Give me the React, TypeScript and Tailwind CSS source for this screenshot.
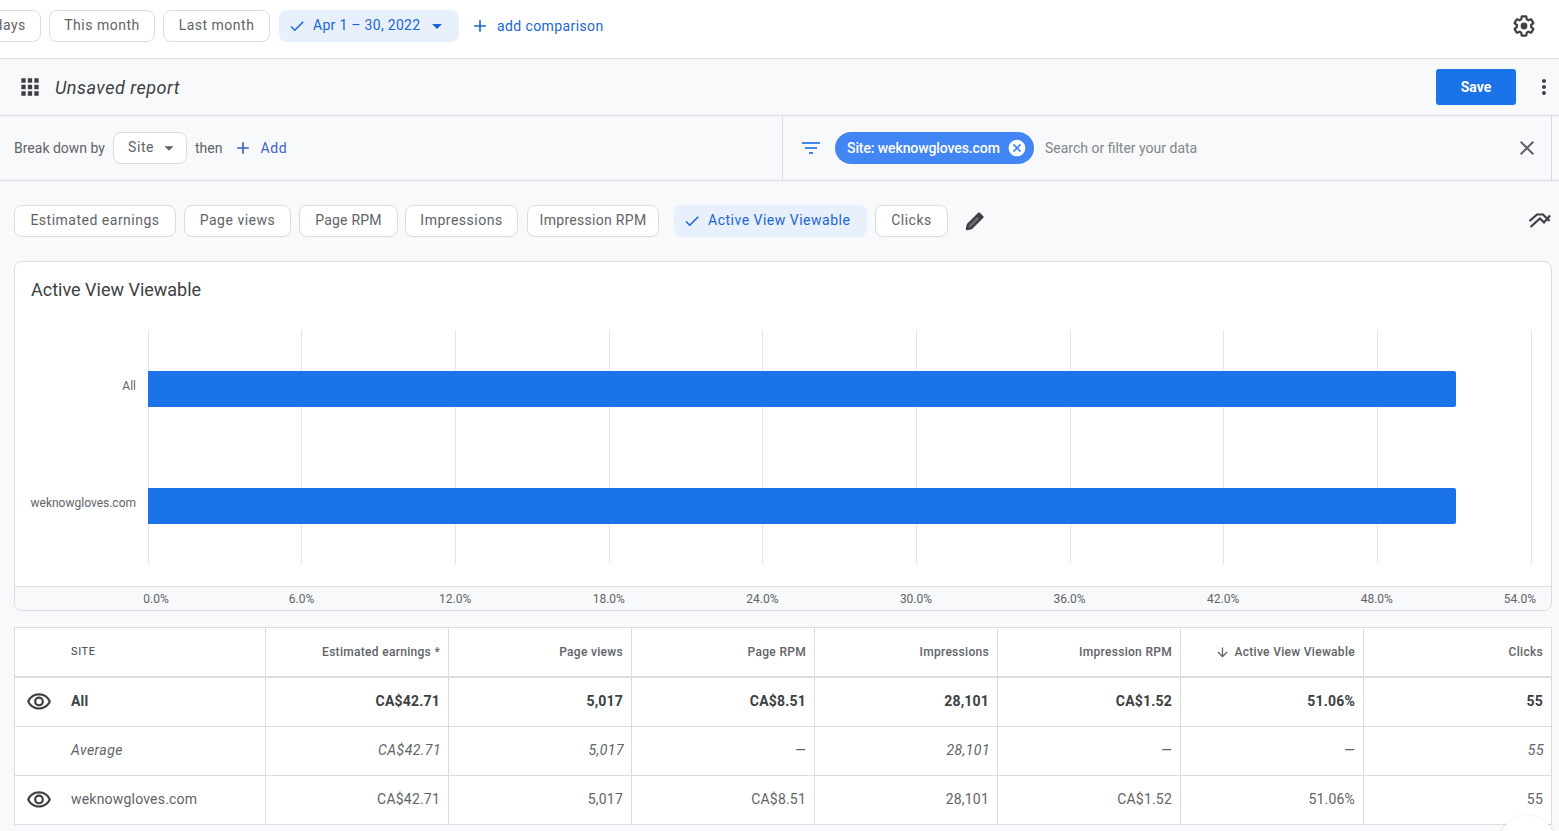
import {
  MdAdd,
  MdApps,
  MdArrowDownward,
  MdArrowDropDown,
  MdCancel,
  MdCheck,
  MdClose,
  MdFilterList,
  MdMoreVert,
  MdOutlineVisibility,
} from "react-icons/md";

const font = "font-['Roboto',sans-serif]";

function Chip({
  label,
  className = "",
  tracking = "tracking-[0.5px]",
}: {
  label: string;
  className?: string;
  tracking?: string;
}) {
  return (
    <div
      className={`h-8 shrink-0 flex items-center justify-center rounded-lg border border-[#dadce0] bg-white pb-[1px] text-[14px] text-[#5f6368] ${tracking} ${className}`}
    >
      {label}
    </div>
  );
}

function ActiveChip({
  label,
  caret,
  className = "",
  tracking = "tracking-[0.45px]",
}: {
  label: string;
  caret?: boolean;
  className?: string;
  tracking?: string;
}) {
  return (
    <div
      className={`h-8 shrink-0 flex items-center rounded-lg bg-[#e8f0fe] pl-[9px] pb-[1px] text-[14px] text-[#1967d2] ${tracking} ${className}`}
    >
      <MdCheck className="text-[18px] mr-[7px]" />
      {label}
      {caret && <MdArrowDropDown className="text-[24px] ml-[5px]" />}
    </div>
  );
}

function TrendIcon() {
  return (
    <svg width="24" height="24" viewBox="0 0 24 24" fill="none" stroke="#3c4043" strokeWidth="2.2">
      <path d="M1.5 12 9 5.5h6l6.5 6.5" />
      <path d="M2.5 18 12 9.5l4 4 6-7" />
    </svg>
  );
}

function PencilIcon() {
  return (
    <svg width="24" height="24" viewBox="0 0 24 24" className="ml-[3px]">
      <path d="M4 20 5 15.5 16 4.5 19.5 8 8.5 19Z" fill="#6b6e72" stroke="#3c4043" strokeWidth="2.4" strokeLinejoin="round" />
      <path d="M13.5 7 16 4.5 19.5 8 17 10.5Z" fill="#3c4043" />
    </svg>
  );
}

function GearIcon() {
  return (
    <svg width="24" height="24" viewBox="0 0 24 24" className="ml-auto mr-[23px]">
      <path
        d="M19.14 12.94c.04-.3.06-.61.06-.94 0-.32-.02-.64-.07-.94l2.03-1.58c.18-.14.23-.41.12-.61l-1.92-3.32c-.12-.22-.37-.29-.59-.22l-2.39.96c-.5-.38-1.03-.7-1.62-.94l-.36-2.54c-.04-.24-.24-.41-.48-.41h-3.84c-.24 0-.43.17-.47.41l-.36 2.54c-.59.24-1.13.57-1.62.94l-2.39-.96c-.22-.08-.47 0-.59.22L2.74 8.87c-.12.21-.08.47.12.61l2.03 1.58c-.05.3-.09.63-.09.94s.02.64.07.94l-2.03 1.58c-.18.14-.23.41-.12.61l1.92 3.32c.12.22.37.29.59.22l2.39-.96c.5.38 1.03.7 1.62.94l.36 2.54c.05.24.24.41.48.41h3.84c.24 0 .44-.17.47-.41l.36-2.54c.59-.24 1.13-.56 1.62-.94l2.39.96c.22.08.47 0 .59-.22l1.92-3.32c.12-.22.07-.47-.12-.61l-2.01-1.58z"
        fill="none"
        stroke="#3c4043"
        strokeWidth="2.2"
      />
      <circle cx="12" cy="12" r="3.4" fill="#3c4043" />
    </svg>
  );
}

const ticks = [0, 1, 2, 3, 4, 5, 6, 7, 8];
const axis = ["6.0%", "12.0%", "18.0%", "24.0%", "30.0%", "36.0%", "42.0%", "48.0%"];

function Bar() {
  return <div className="h-9 w-[1308px] rounded-r-[2px] bg-[#1a73e8]" />;
}

const headers = [
  "Estimated earnings *",
  "Page views",
  "Page RPM",
  "Impressions",
  "Impression RPM",
  "Active View Viewable",
  "Clicks",
];

const rows = [
  { name: "All", eye: true, italic: false, style: "font-bold text-[#3c4043] tracking-[0.2px]", vals: ["CA$42.71", "5,017", "CA$8.51", "28,101", "CA$1.52", "51.06%", "55"] },
  { name: "Average", eye: false, italic: true, style: "italic text-[#5f6368] tracking-[0.45px]", vals: ["CA$42.71", "5,017", "—", "28,101", "—", "—", "55"] },
  { name: "weknowgloves.com", eye: true, italic: false, style: "text-[#5f6368] tracking-[0.2px]", vals: ["CA$42.71", "5,017", "CA$8.51", "28,101", "CA$1.52", "51.06%", "55"] },
];

function TableRow({ row, last }: { row: (typeof rows)[number]; last: boolean }) {
  return (
    <div className={`grid grid-cols-[251px_repeat(6,183px)_1fr] ${last ? "h-[48px]" : "h-[49px] border-b border-[#dadce0]"}`}>
      <div className={`flex items-center border-r border-[#dadce0] pb-[1px] text-[14px] ${row.style}`}>
        <div className="w-[48px] flex justify-center mr-[8px]">
          {row.eye && <MdOutlineVisibility className="text-[26px] text-[#3c4043]" />}
        </div>
        {row.name}
      </div>
      {row.vals.map((v, i) => (
        <div
          key={i}
          className={`flex items-center justify-end pb-[1px] text-[14px] ${row.italic && v !== "—" ? "pr-[7px]" : "pr-[8px]"} ${i < 6 ? "border-r border-[#dadce0]" : ""} ${row.style}`}
        >
          {v}
        </div>
      ))}
    </div>
  );
}

export default function App() {
  return (
    <div className={`${font} relative w-[1559px] h-[831px] overflow-hidden bg-[#f8f9fa]`}>
      {/* date range */}
      <div className="h-[59px] bg-white border-b border-[#dadce0] flex items-center overflow-hidden pb-[6px]">
        <Chip label="Last 7 days" className="ml-[-66px] mr-2 w-[107px]" />
        <Chip label="This month" className="mr-2 w-[106px]" />
        <Chip label="Last month" className="mr-[9px] w-[107px]" />
        <ActiveChip label="Apr 1 – 30, 2022" caret className="w-[180px]" tracking="tracking-[0.3px]" />
        <div className="flex items-center ml-[13px] text-[14px] tracking-[0.4px] text-[#1967d2]">
          <MdAdd className="text-[20px] mr-[7px] ml-[-2px]" />
          add comparison
        </div>
        <GearIcon />
      </div>

      {/* report title */}
      <div className="h-[57px] border-b border-[#dadce0] flex items-center">
        <MdApps className="text-[26px] text-[#3c4043] ml-[17px] mr-[12px]" />
        <span className="text-[18px] italic tracking-[0.5px] text-[#3c4043]">Unsaved report</span>
        <button className="ml-auto h-9 w-[80px] rounded-[3px] bg-[#1a73e8] text-[14px] font-bold text-white">Save</button>
        <MdMoreVert className="text-[24px] text-[#3c4043] ml-[16px] mr-[3px]" />
      </div>

      {/* break down + filter */}
      <div className="h-[65px] border-b border-[#dadce0] flex">
        <div className="w-[783px] border-r border-[#dadce0] flex items-center text-[14px] text-[#5f6368]">
          <span className="ml-[14px]">Break down by</span>
          <div className="ml-[8px] h-8 w-[74px] flex items-center rounded-lg border border-[#dadce0] bg-white pl-[14px] pb-[1px] tracking-[0.6px]">
            Site
            <MdArrowDropDown className="text-[22px] ml-[4px]" />
          </div>
          <span className="ml-[8px]">then</span>
          <MdAdd className="text-[20px] text-[#3b62c4] ml-[11px]" />
          <span className="ml-[7px] text-[#3b62c4] tracking-[0.7px]">Add</span>
        </div>
        <div className="w-[769px] flex items-center border-r border-[#dadce0]">
          <MdFilterList className="text-[24px] text-[#4285f4] ml-[16px]" />
          <div className="ml-[12px] h-8 w-[199px] flex items-center rounded-full bg-[#4285f4] pl-[12px] text-[14px] font-medium tracking-[-0.1px] text-white">
            Site: weknowgloves.com
            <MdCancel className="text-[20px] ml-[7px]" />
          </div>
          <span className="ml-[11px] text-[14px] text-[#80868b]">Search or filter your data</span>
          <MdClose className="text-[24px] text-[#5f6368] ml-auto mr-[12px]" />
        </div>
      </div>

      {/* metric chips */}
      <div className="flex items-center mt-[24px] pl-[14px] h-8">
        <Chip label="Estimated earnings" className="w-[162px] mr-2" />
        <Chip label="Page views" className="w-[107px] mr-2" />
        <Chip label="Page RPM" className="w-[99px] mr-[7px]" tracking="tracking-[0.2px]" />
        <Chip label="Impressions" className="w-[113px] mr-[9px]" />
        <Chip label="Impression RPM" className="w-[132px] mr-[15px]" tracking="tracking-[0.3px]" />
        <ActiveChip label="Active View Viewable" className="w-[193px] mr-2" tracking="tracking-[0.5px]" />
        <Chip label="Clicks" className="w-[73px]" />
        <div className="ml-[12px]">
          <PencilIcon />
        </div>
        <div className="ml-auto mr-[7px]">
          <TrendIcon />
        </div>
      </div>

      {/* chart card */}
      <div className="mt-[24px] ml-[14px] w-[1538px] h-[350px] rounded-lg border border-[#dadce0] bg-white overflow-hidden flex flex-col">
        <div className="pl-[16px] pt-[15px] text-[18px] leading-[26px] text-[#3c4043]">Active View Viewable</div>
        <div className="mt-[27px] h-[234px] flex">
          <div className="w-[133px] flex flex-col text-right pr-[12px] text-[12px] text-[#5f6368]">
            <div className="h-[117px] flex items-center justify-end pb-[5px]">All</div>
            <div className="h-[117px] flex items-center justify-end pb-[5px]">weknowgloves.com</div>
          </div>
          <div className="relative flex-1">
            <div className="absolute inset-y-0 left-[-0.4px] right-0 flex">
              {ticks.map((t) => (
                <div key={t} className="w-[153.7px] shrink-0 border-l border-[#e3e5e8]" />
              ))}
              <div className="border-l border-[#e3e5e8]" />
            </div>
            <div className="relative flex flex-col gap-[81px] pt-[41px]">
              <Bar />
              <Bar />
            </div>
          </div>
        </div>
        <div className="mt-[22px] flex-1 border-t border-[#dadce0] bg-[#f8f9fa] flex items-center text-[12px] text-[#5f6368]">
          <div className="w-[209.8px] shrink-0 text-right pr-[56px]">0.0%</div>
          {axis.map((a) => (
            <div key={a} className="w-[153.6px] shrink-0 text-center">
              {a}
            </div>
          ))}
          <div className="flex-1 text-right pr-[15px]">54.0%</div>
        </div>
      </div>

      {/* table */}
      <div className="mt-[16px] ml-[14px] w-[1538px] border border-[#dadce0] bg-white">
        <div className="grid grid-cols-[251px_repeat(6,183px)_1fr] h-[50px] border-b-2 border-[#dadce0]">
          <div className="flex items-center border-r border-[#dadce0] pl-[56px] text-[11px] tracking-[0.6px] text-[#3c4043]">
            SITE
          </div>
          {headers.map((h, i) => (
            <div
              key={h}
              className={`flex items-center justify-end pr-[8px] text-[12px] font-medium tracking-[0.3px] text-[#5f6368] ${i < 6 ? "border-r border-[#dadce0]" : ""}`}
            >
              {h === "Active View Viewable" && <MdArrowDownward className="text-[15px] mr-[4px]" />}
              {h}
            </div>
          ))}
        </div>
        {rows.map((r, i) => (
          <TableRow key={r.name} row={r} last={i === rows.length - 1} />
        ))}
      </div>

      {/* floating button, mostly off-screen */}
      <div className="absolute left-[1499px] top-[815px] h-14 w-14 rounded-full bg-white shadow-[0_1px_3px_rgba(60,64,67,0.3)]" />
    </div>
  );
}
